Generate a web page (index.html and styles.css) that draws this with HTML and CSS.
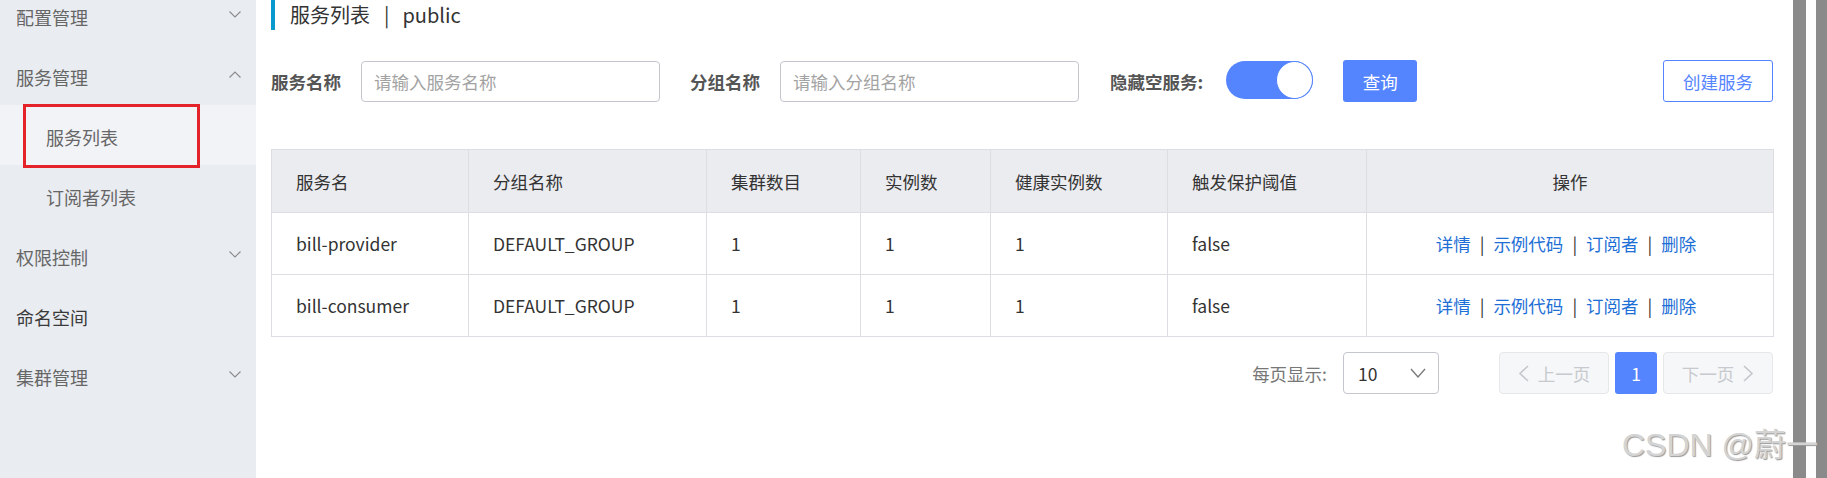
FILE: index.html
```html
<!DOCTYPE html>
<html lang="zh-CN">
<head>
<meta charset="utf-8">
<title>服务列表</title>
<link rel="stylesheet" href="styles.css">
</head>
<body>
<div class="app">
  <aside class="sidebar">
    <ul class="menu">
      <li class="menu-item"><span>配置管理</span><svg class="chev" viewBox="0 0 12 7"><polyline points="0.5,0.5 6,6 11.5,0.5"/></svg></li>
      <li class="menu-item"><span>服务管理</span><svg class="chev" viewBox="0 0 12 7"><polyline points="0.5,6.5 6,1 11.5,6.5"/></svg></li>
      <li class="menu-item sub active"><span>服务列表</span></li>
      <li class="menu-item sub"><span>订阅者列表</span></li>
      <li class="menu-item"><span>权限控制</span><svg class="chev" viewBox="0 0 12 7"><polyline points="0.5,0.5 6,6 11.5,0.5"/></svg></li>
      <li class="menu-item leaf"><span>命名空间</span></li>
      <li class="menu-item"><span>集群管理</span><svg class="chev" viewBox="0 0 12 7"><polyline points="0.5,0.5 6,6 11.5,0.5"/></svg></li>
    </ul>
    <div class="annot"></div>
  </aside>

  <main class="main">
    <h1 class="page-title">服务列表<span class="title-sep">|</span>public</h1>

    <div class="filters">
      <label class="f-label">服务名称</label>
      <div class="f-input">请输入服务名称</div>
      <label class="f-label gap">分组名称</label>
      <div class="f-input">请输入分组名称</div>
      <label class="f-label gap hide-label">隐藏空服务:</label>
      <div class="switch"><span class="knob"></span></div>
      <button class="btn primary">查询</button>
      <button class="btn outline">创建服务</button>
    </div>

    <table class="svc-table">
      <colgroup>
        <col style="width:197px"><col style="width:238px"><col style="width:154px"><col style="width:130px"><col style="width:177px"><col style="width:199px"><col style="width:407px">
      </colgroup>
      <thead>
        <tr><th>服务名</th><th>分组名称</th><th>集群数目</th><th>实例数</th><th>健康实例数</th><th>触发保护阈值</th><th class="center">操作</th></tr>
      </thead>
      <tbody>
        <tr><td>bill-provider</td><td>DEFAULT_GROUP</td><td>1</td><td>1</td><td>1</td><td>false</td>
          <td class="center ops"><a>详情</a><span class="sep">|</span><a>示例代码</a><span class="sep">|</span><a>订阅者</a><span class="sep">|</span><a>删除</a></td></tr>
        <tr><td>bill-consumer</td><td>DEFAULT_GROUP</td><td>1</td><td>1</td><td>1</td><td>false</td>
          <td class="center ops"><a>详情</a><span class="sep">|</span><a>示例代码</a><span class="sep">|</span><a>订阅者</a><span class="sep">|</span><a>删除</a></td></tr>
      </tbody>
    </table>

    <div class="pager">
      <span class="pg-label">每页显示:</span>
      <div class="pg-select"><span>10</span><svg class="pg-chev" viewBox="0 0 16 10"><polyline points="1,1 8,9 15,1"/></svg></div>
      <div class="pg-btn disabled prev"><svg viewBox="0 0 11 17"><polyline points="10,1 2,8.5 10,16"/></svg><span>上一页</span></div>
      <div class="pg-num">1</div>
      <div class="pg-btn disabled next"><span>下一页</span><svg viewBox="0 0 11 17"><polyline points="1,1 9,8.5 1,16"/></svg></div>
    </div>
  </main>

  <div class="scrollbars"><i class="bar a"></i><i class="gapbar"></i><i class="bar b"></i></div>
</div>
<div class="watermark">CSDN @蔚一</div>
</body>
</html>
```

FILE: styles.css
```css
* { box-sizing: border-box; }
html, body { margin: 0; padding: 0; }
body {
  font-family: "Noto Sans CJK SC", "Noto Sans", sans-serif;
  font-size: 17.5px;
  color: #333;
  background: #fff;
  overflow: hidden;
}
.app {
  display: flex;
  height: 478px;
  overflow: hidden;
}

/* sidebar */
.sidebar {
  position: relative;
  width: 256px;
  flex: 0 0 256px;
  background: #e9ecf1;
  overflow: hidden;
}
.menu {
  list-style: none;
  margin: -15px 0 0 0;
  padding: 0;
}
.menu-item {
  height: 60px;
  display: flex;
  align-items: center;
  justify-content: space-between;
  padding: 3px 15px 0 16px;
  color: #666;
  font-size: 18px;
}
.menu-item.sub { padding-left: 46px; }
.menu-item.active { background: #f2f3f7; }
.menu-item.leaf { color: #3a3a3a; }
.chev {
  width: 12px;
  height: 7px;
  margin-top: -5px;
  fill: none;
  stroke: #8a8a8a;
  stroke-width: 1.1;
}
.annot {
  position: absolute;
  left: 23px;
  top: 104px;
  width: 177px;
  height: 64px;
  border: 3px solid #e3222a;
}

/* main */
.main {
  flex: 1;
  padding: 0 20px 0 15px;
  min-width: 0;
}
.page-title {
  margin: 0;
  height: 30px;
  line-height: 30px;
  font-size: 20px;
  font-weight: normal;
  color: #333;
  border-left: 4px solid #0a99cc;
  padding-left: 15px;
}
.title-sep { margin: 0 13px 0 14px; }

.filters {
  display: flex;
  align-items: center;
  margin-top: 30px;
  height: 42px;
}
.f-label {
  font-weight: bold;
  color: #555;
  margin-right: 20px;
  white-space: nowrap;
}
.f-label.gap { margin-left: 30px; }
.f-label.hide-label { margin-left: 31px; margin-right: 23px; }
.f-input {
  width: 299px;
  height: 41px;
  border: 1px solid #c4c6cf;
  border-radius: 4px;
  padding: 0 12px;
  line-height: 39px;
  color: #a3a3a3;
  margin-top: 1px;
}
.switch {
  width: 87px;
  height: 38px;
  border-radius: 19px;
  background: #5584ff;
  position: relative;
  margin-top: -3px;
}
.knob {
  position: absolute;
  right: 0;
  top: 0;
  width: 37px;
  height: 38px;
  border-radius: 50%;
  background: #fff;
  border: 1px solid #5584ff;
}
.btn {
  font-family: inherit;
  font-size: 17.5px;
  height: 42px;
  border-radius: 3px;
  cursor: pointer;
}
.btn.primary {
  margin-left: 30px;
  width: 74px;
  background: #5584ff;
  border: none;
  color: #fff;
}
.btn.outline {
  margin-left: auto;
  width: 110px;
  background: #fff;
  border: 1px solid #5584ff;
  color: #5584ff;
}

/* table */
.svc-table {
  margin-top: 47px;
  width: 1502px;
  table-layout: fixed;
  border-collapse: collapse;
  border: 1px solid #dcdee3;
}
.svc-table th, .svc-table td {
  border: 1px solid #dcdee3;
  padding: 0 24px;
  text-align: left;
  font-weight: normal;
  color: #333;
  white-space: nowrap;
}
.svc-table th {
  background: #ebecf0;
  height: 63px;
}
.svc-table td { height: 62px; }
.svc-table .center { text-align: center; }
.svc-table td.ops { padding: 0 30px 0 22px; }
.ops a { color: #1d6fd6; }
.ops .sep { margin: 0 9px; color: #333; }

/* pager */
.pager {
  display: flex;
  align-items: center;
  justify-content: flex-end;
  width: 1502px;
  margin-top: 15px;
  height: 42px;
}
.pg-label { color: #777; margin-right: 16px; }
.pg-select {
  width: 96px;
  height: 42px;
  border: 1px solid #c4c6cf;
  border-radius: 4px;
  display: flex;
  align-items: center;
  justify-content: space-between;
  padding: 0 12px 0 14px;
  color: #333;
}
.pg-chev {
  width: 16px;
  height: 10px;
  fill: none;
  stroke: #777;
  stroke-width: 1.3;
}
.pg-btn {
  height: 42px;
  width: 110px;
  border: 1px solid #e6e7eb;
  background: #f6f7f9;
  border-radius: 4px;
  color: #c7c9ce;
  display: flex;
  align-items: center;
  justify-content: center;
  gap: 9px;
}
.pg-btn.prev { margin-left: 60px; }
.pg-btn svg {
  width: 11px;
  height: 17px;
  fill: none;
  stroke: #c4c6cb;
  stroke-width: 1.6;
}
.pg-num {
  width: 42px;
  height: 42px;
  margin: 0 6px;
  background: #5584ff;
  color: #fff;
  border-radius: 3px;
  display: flex;
  align-items: center;
  justify-content: center;
}

/* right scrollbars */
.scrollbars {
  flex: 0 0 34px;
  display: flex;
}
.scrollbars .bar { background: #8a8a8a; }
.scrollbars .bar.a { width: 13px; }
.scrollbars .gapbar { width: 10px; background: #fdfdfd; }
.scrollbars .bar.b { width: 11px; }

.watermark {
  position: absolute;
  left: 1622px;
  top: 429px;
  font-family: "Liberation Sans", Arial, "Noto Sans CJK SC", sans-serif;
  font-size: 32px;
  line-height: 32px;
  color: #d4d4d4;
  text-shadow: 1px 1px 1px #9a9a9a;
  white-space: nowrap;
}
```
